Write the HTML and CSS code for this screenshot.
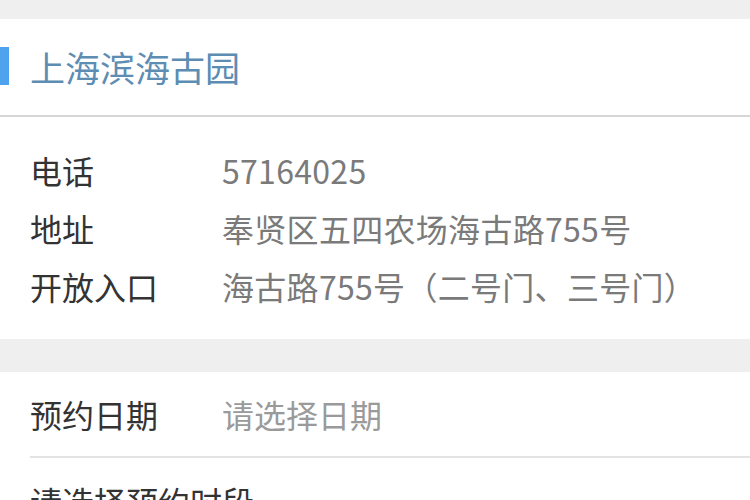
FILE: index.html
```html
<!DOCTYPE html>
<html lang="zh-CN">
<head>
<meta charset="utf-8">
<link rel="stylesheet" href="styles.css">
</head>
<body>
<div class="page">
  <div class="gap-top"></div>
  <header class="title-bar">
    <span class="mark"></span>
    <h1 class="title">上海滨海古园</h1>
  </header>
  <section class="info">
    <div class="row"><span class="label">电话</span><span class="value">57164025</span></div>
    <div class="row"><span class="label">地址</span><span class="value">奉贤区五四农场海古路755号</span></div>
    <div class="row"><span class="label">开放入口</span><span class="value">海古路755号（二号门、三号门）</span></div>
  </section>
  <div class="gap-mid"></div>
  <section class="form">
    <div class="form-row"><span class="label">预约日期</span><span class="placeholder">请选择日期</span></div>
    <div class="form-row-last"><span class="label-free">请选择预约时段</span></div>
  </section>
</div>
</body>
</html>
```
FILE: styles.css
```css
* { box-sizing: border-box; }
html, body { margin: 0; padding: 0; }
body {
  width: 750px;
  height: 500px;
  overflow: hidden;
  background: #ffffff;
  font-family: "Noto Sans CJK SC", "Noto Sans", sans-serif;
}
.page { display: flex; flex-direction: column; }
.gap-top { height: 19px; background: #efeff0; }
.title-bar {
  height: 98px;
  display: flex;
  align-items: center;
  background: #fff;
  border-bottom: 2px solid #d6d6d8;
  padding-bottom: 2px;
}
.mark {
  width: 9px;
  height: 38px;
  background: #4ea2ee;
  margin-right: 21px;
}
.title {
  margin: 0;
  font-size: 35px;
  font-weight: 400;
  color: #5d8db3;
}
.info {
  height: 222px;
  padding-top: 24px;
  padding-left: 30px;
  display: flex;
  flex-direction: column;
}
.row {
  display: flex;
  align-items: center;
  height: 58px;
  font-size: 32px;
}
.label { color: #333; width: 192px; flex: none; }
.label-free { color: #333; white-space: nowrap; }
.value { color: #7a7a7a; letter-spacing: 0.3px; }
.gap-mid { height: 33px; background: #efeff0; }
.form { padding-left: 30px; }
.form-row {
  display: flex;
  align-items: center;
  height: 86px;
  font-size: 32px;
  border-bottom: 2px solid #e3e3e3;
}
.form-row-last {
  padding-top: 20px;
  font-size: 32px;
  line-height: 46px;
}
.placeholder { color: #9a9a9a; }
```
